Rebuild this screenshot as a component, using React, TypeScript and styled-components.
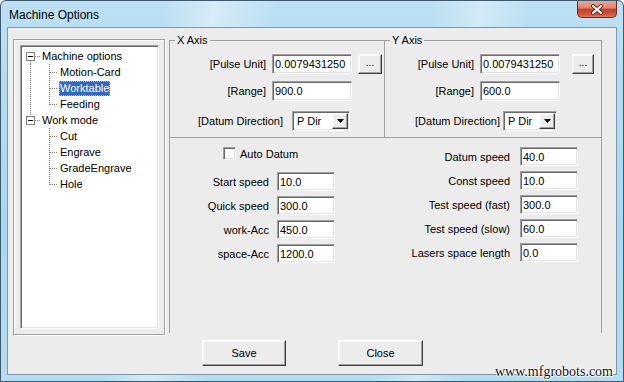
import styled, { createGlobalStyle } from "styled-components";

const GlobalStyle = createGlobalStyle`
  html, body {
    margin: 0;
    padding: 0;
    overflow: hidden;
  }
  body {
    font-family: "Liberation Sans", Arial, sans-serif;
    font-size: 11px;
    color: #000;
  }
  * {
    box-sizing: border-box;
  }
`;

interface TreeNode {
  label: string;
  level: 0 | 1;
  last?: boolean;
  parentLast?: boolean;
  selected?: boolean;
}

const tree: TreeNode[] = [
  { label: "Machine options", level: 0 },
  { label: "Motion-Card", level: 1 },
  { label: "Worktable", level: 1, selected: true },
  { label: "Feeding", level: 1, last: true },
  { label: "Work mode", level: 0, last: true },
  { label: "Cut", level: 1, parentLast: true },
  { label: "Engrave", level: 1, parentLast: true },
  { label: "GradeEngrave", level: 1, parentLast: true },
  { label: "Hole", level: 1, last: true, parentLast: true },
];

const leftFields = [
  { label: "Start speed", value: "10.0" },
  { label: "Quick speed", value: "300.0" },
  { label: "work-Acc", value: "450.0" },
  { label: "space-Acc", value: "1200.0" },
];

const rightFields = [
  { label: "Datum speed", value: "40.0" },
  { label: "Const speed", value: "10.0" },
  { label: "Test speed (fast)", value: "300.0" },
  { label: "Test speed (slow)", value: "60.0" },
  { label: "Lasers space length", value: "0.0" },
];

const dot = {
  stroke: "#808080",
  strokeDasharray: "1 1",
  shapeRendering: "crispEdges" as const,
};

function TreeLines({ node }: { node: TreeNode }) {
  if (node.level === 0) {
    return (
      <svg width="20" height="16">
        {node.last ? (
          <line x1="9.5" y1="0" x2="9.5" y2="4" {...dot} />
        ) : (
          <line x1="9.5" y1="13" x2="9.5" y2="16" {...dot} />
        )}
        <line x1="14" y1="8.5" x2="20" y2="8.5" {...dot} />
        <rect x="5.5" y="4.5" width="8" height="8" fill="#fff" stroke="#848484" shapeRendering="crispEdges" />
        <line x1="7" y1="8.5" x2="12" y2="8.5" stroke="#000" shapeRendering="crispEdges" />
      </svg>
    );
  }
  return (
    <svg width="38" height="16">
      {!node.parentLast && <line x1="9.5" y1="0" x2="9.5" y2="16" {...dot} />}
      <line x1="28.5" y1="0" x2="28.5" y2={node.last ? 9 : 16} {...dot} />
      <line x1="29" y1="8.5" x2="37" y2="8.5" {...dot} />
    </svg>
  );
}

export default function App() {
  return (
    <>
      <GlobalStyle />
      <S.Window>
        <S.TitleBar>
          <S.Title>Machine Options</S.Title>
          <S.CloseButton>
            <svg width="14" height="11" viewBox="0 0 14 11">
              <path d="M3 2 L11 9 M11 2 L3 9" stroke="#6b2418" strokeWidth="4" strokeLinecap="round" />
              <path d="M3 2 L11 9 M11 2 L3 9" stroke="#fff" strokeWidth="2.2" strokeLinecap="round" />
            </svg>
          </S.CloseButton>
        </S.TitleBar>

        <S.Client>
          <S.TopArea>
            <S.TreeFrame>
              <S.TreeBox>
                {tree.map((node) => (
                  <S.TreeRow key={node.label}>
                    <TreeLines node={node} />
                    <S.TreeLabel $selected={node.selected}>{node.label}</S.TreeLabel>
                  </S.TreeRow>
                ))}
              </S.TreeBox>
            </S.TreeFrame>

            <S.RightPanel>
              <S.AxisGroup $noRight>
                <S.Legend>X Axis</S.Legend>
                <S.AxisRow>
                  <S.FieldLabel $w={96} $gap={6}>[Pulse Unit]</S.FieldLabel>
                  <S.Field $w={80} $h={20} readOnly value="0.0079431250" />
                  <S.SmallButton $gap={6} $w={24}>...</S.SmallButton>
                </S.AxisRow>
                <S.AxisRow $top={7}>
                  <S.FieldLabel $w={96} $gap={6}>[Range]</S.FieldLabel>
                  <S.Field $w={80} $h={20} readOnly value="900.0" />
                </S.AxisRow>
                <S.AxisRow $top={10}>
                  <S.FieldLabel $w={113} $gap={9}>[Datum Direction]</S.FieldLabel>
                  <S.Combo $w={58}>
                    <span>P Dir</span>
                    <S.ComboArrow>
                      <svg width="7" height="4">
                        <path d="M0 0 H7 L3.5 4 Z" fill="#000" />
                      </svg>
                    </S.ComboArrow>
                  </S.Combo>
                </S.AxisRow>
              </S.AxisGroup>

              <S.AxisGroup>
                <S.Legend>Y Axis</S.Legend>
                <S.AxisRow>
                  <S.FieldLabel $w={89} $gap={6}>[Pulse Unit]</S.FieldLabel>
                  <S.Field $w={80} $h={20} readOnly value="0.0079431250" />
                  <S.SmallButton $gap={12} $w={22}>...</S.SmallButton>
                </S.AxisRow>
                <S.AxisRow $top={7}>
                  <S.FieldLabel $w={89} $gap={6}>[Range]</S.FieldLabel>
                  <S.Field $w={80} $h={20} readOnly value="600.0" />
                </S.AxisRow>
                <S.AxisRow $top={10}>
                  <S.FieldLabel $w={115} $gap={3}>[Datum Direction]</S.FieldLabel>
                  <S.Combo $w={54}>
                    <span>P Dir</span>
                    <S.ComboArrow>
                      <svg width="7" height="4">
                        <path d="M0 0 H7 L3.5 4 Z" fill="#000" />
                      </svg>
                    </S.ComboArrow>
                  </S.Combo>
                </S.AxisRow>
              </S.AxisGroup>

              <S.SpeedPanel>
                <S.SpeedColumn $w={230}>
                  <S.CheckRow>
                    <S.CheckBox />
                    <span>Auto Datum</span>
                  </S.CheckRow>
                  {leftFields.map((f) => (
                    <S.SpeedRow key={f.label}>
                      <S.FieldLabel $w={99} $gap={8}>{f.label}</S.FieldLabel>
                      <S.Field $w={58} $h={19} readOnly value={f.value} />
                    </S.SpeedRow>
                  ))}
                </S.SpeedColumn>
                <S.SpeedColumn $w={200}>
                  {rightFields.map((f) => (
                    <S.SpeedRow key={f.label}>
                      <S.FieldLabel $w={110} $gap={10}>{f.label}</S.FieldLabel>
                      <S.Field $w={58} $h={19} readOnly value={f.value} />
                    </S.SpeedRow>
                  ))}
                </S.SpeedColumn>
              </S.SpeedPanel>
            </S.RightPanel>
          </S.TopArea>

          <S.ButtonRow>
            <S.PushButton $w={84}>Save</S.PushButton>
            <S.PushButton $w={85}>Close</S.PushButton>
          </S.ButtonRow>
        </S.Client>

        <S.Watermark>www.mfgrobots.com</S.Watermark>
      </S.Window>
    </>
  );
}

const sunken = `
  background: #fff;
  border: 1px solid;
  border-color: #a0a0a0 #fff #fff #a0a0a0;
  box-shadow: inset 1px 1px 0 #696969, inset -1px -1px 0 #e3e3e3;
`;

const raised = `
  background: #ececec;
  border: 1px solid;
  border-color: #fff #404040 #404040 #fff;
  box-shadow: inset -1px -1px 0 #a0a0a0, inset 1px 1px 0 #f8f8f8;
`;

const S = {
  Window: styled.div`
    position: relative;
    width: 624px;
    height: 382px;
    display: flex;
    flex-direction: column;
    padding: 0 6px 6px 6px;
    border: 1px solid #3f5a6e;
    border-radius: 6px 6px 0 0;
    background:
      linear-gradient(100deg, transparent 0 24%, rgba(255, 255, 255, 0.4) 31%, transparent 40%,
        transparent 63%, rgba(255, 255, 255, 0.35) 70%, transparent 77%),
      linear-gradient(to bottom, #bce0f3, #a9d6ee 60%, #b6dcf0);
  `,

  TitleBar: styled.div`
    height: 26px;
    display: flex;
    align-items: flex-start;
    justify-content: space-between;
  `,

  Title: styled.span`
    margin-top: 7px;
    padding-left: 2px;
    font-family: "Liberation Sans", Arial, sans-serif;
    font-size: 12px;
    line-height: 14px;
    color: #000;
  `,

  CloseButton: styled.div`
    width: 40px;
    height: 17px;
    display: flex;
    align-items: center;
    justify-content: center;
    border: 1px solid #6d2a1f;
    border-top: none;
    border-radius: 0 0 5px 5px;
    background: linear-gradient(to bottom, #e9a899 0%, #dc8470 45%, #c4402a 50%, #d0583f 85%, #e07a5e 100%);
  `,

  Client: styled.div`
    flex: 1;
    display: flex;
    flex-direction: column;
    padding: 6px 0 0 5px;
    background: #ececec;
    border: 1px solid #7e97aa;
  `,

  TopArea: styled.div`
    display: flex;
    align-items: flex-start;
    gap: 4px;
  `,

  TreeFrame: styled.div`
    width: 152px;
    height: 296px;
    margin-top: 5px;
    padding: 5px 5px 5px 6px;
    display: flex;
    border: 1px solid #a0a0a0;
    box-shadow: inset 1px 1px 0 #fff, 1px 1px 0 #fff;
  `,

  TreeBox: styled.div`
    flex: 1;
    padding: 2px 0 0 0;
    ${sunken}
  `,

  TreeRow: styled.div`
    height: 16px;
    display: flex;
    align-items: center;
    white-space: nowrap;
  `,

  TreeLabel: styled.span<{ $selected?: boolean }>`
    line-height: 15px;
    padding: 0 1px;
    background: ${(p) => (p.$selected ? "#3169c6" : "transparent")};
    color: ${(p) => (p.$selected ? "#fff" : "#000")};
    outline: ${(p) => (p.$selected ? "1px dotted #9cc0f0" : "none")};
    outline-offset: -1px;
  `,

  RightPanel: styled.div`
    display: grid;
    grid-template-columns: 215px 218px;
  `,

  AxisGroup: styled.fieldset<{ $noRight?: boolean }>`
    margin: 0;
    min-width: 0;
    padding: 8px 0 6px 0;
    border: 1px solid #a0a0a0;
    border-right: ${(p) => (p.$noRight ? "none" : "1px solid #a0a0a0")};
  `,

  Legend: styled.legend`
    margin-left: 5px;
    padding: 0 2px;
    font-size: 11px;
    line-height: 12px;
  `,

  AxisRow: styled.div<{ $top?: number }>`
    height: 20px;
    display: flex;
    align-items: center;
    margin-top: ${(p) => p.$top ?? 0}px;
  `,

  FieldLabel: styled.span<{ $w: number; $gap: number }>`
    width: ${(p) => p.$w}px;
    margin-right: ${(p) => p.$gap}px;
    flex-shrink: 0;
    text-align: right;
    white-space: nowrap;
  `,

  Field: styled.input<{ $w: number; $h: number }>`
    width: ${(p) => p.$w}px;
    height: ${(p) => p.$h}px;
    padding: 0 2px;
    margin: 0;
    font-family: "Liberation Sans", Arial, sans-serif;
    font-size: 11px;
    color: #000;
    outline: none;
    ${sunken}
  `,

  SmallButton: styled.div<{ $gap: number; $w: number }>`
    width: ${(p) => p.$w}px;
    height: 20px;
    margin-left: ${(p) => p.$gap}px;
    display: flex;
    align-items: center;
    justify-content: center;
    padding-bottom: 3px;
    font-size: 10px;
    ${raised}
  `,

  Combo: styled.div<{ $w: number }>`
    width: ${(p) => p.$w}px;
    height: 20px;
    display: flex;
    align-items: center;
    justify-content: space-between;
    padding: 1px 1px 1px 4px;
    ${sunken}
  `,

  ComboArrow: styled.span`
    width: 16px;
    height: 16px;
    display: flex;
    align-items: center;
    justify-content: center;
    ${raised}
  `,

  SpeedPanel: styled.div`
    grid-column: 1 / span 2;
    height: 195px;
    display: flex;
    padding-top: 9px;
    border-left: 1px solid #a0a0a0;
    border-right: 1px solid #a0a0a0;
  `,

  SpeedColumn: styled.div<{ $w: number }>`
    width: ${(p) => p.$w}px;
    display: flex;
    flex-direction: column;
    gap: 5px;
  `,

  CheckRow: styled.div`
    height: 13px;
    display: flex;
    align-items: center;
    gap: 4px;
    padding-left: 53px;
    margin-bottom: 7px;
  `,

  CheckBox: styled.span`
    width: 13px;
    height: 13px;
    ${sunken}
  `,

  SpeedRow: styled.div`
    height: 19px;
    display: flex;
    align-items: center;
  `,

  ButtonRow: styled.div`
    display: flex;
    gap: 52px;
    margin-top: 5px;
    padding-left: 189px;
  `,

  PushButton: styled.div<{ $w: number }>`
    width: ${(p) => p.$w}px;
    height: 26px;
    display: flex;
    align-items: center;
    justify-content: center;
    font-size: 11px;
    ${raised}
  `,

  Watermark: styled.span`
    position: absolute;
    right: 10px;
    bottom: 1px;
    font-family: "Liberation Serif", "Times New Roman", serif;
    font-size: 14px;
    line-height: 16px;
    color: #111;
    text-shadow: 1px 0 0 #fff, -1px 0 0 #fff, 0 1px 0 #fff, 0 -1px 0 #fff;
  `,
};
